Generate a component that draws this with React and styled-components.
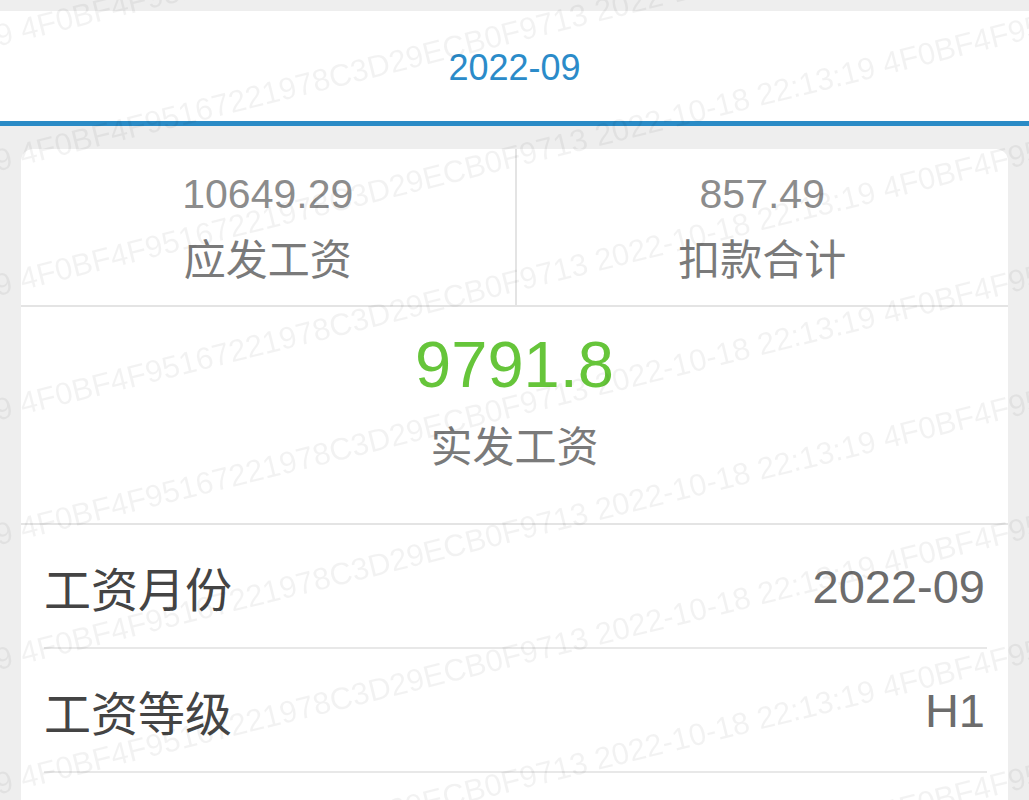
import React from 'react';
import styled, { createGlobalStyle } from 'styled-components';

const GlobalStyle = createGlobalStyle`
	html, body {
		margin: 0;
		padding: 0;
		background: #eeeeee;
	}
	body {
		font-family: "Liberation Sans", "Noto Sans CJK SC", sans-serif;
	}
`;

const WM_TEXT = '4F0BF4F95167221978C3D29ECB0F9713 2022-10-18 22:13:19 ';
const WM_ANGLE = 14;
const WM_LINE = 121;
const WM_PERIOD = 889;

const Page = styled.div`
	padding-top: 11px;
	min-height: 789px;
`;

const Header = styled.div`
	height: 115px;
	box-sizing: border-box;
	padding-top: 3px;
	background: #ffffff;
	border-bottom: 5px solid #2a8bc6;
	display: flex;
	align-items: center;
	justify-content: center;
	font-size: 36px;
	color: #2b8bc9;
`;

const Card = styled.div`
	margin: 23px 21px 0;
	padding-bottom: 60px;
	background: #ffffff;
	border-radius: 12px 12px 0 0;
	overflow: hidden;
`;

const Totals = styled.div`
	display: grid;
	grid-template-columns: 1fr 1fr;
	border-bottom: 2px solid #e4e4e4;
`;

const TotalCell = styled.div`
	display: flex;
	flex-direction: column;
	align-items: center;
	padding: 20px 0 19px;
	gap: 17px;
	& + & {
		border-left: 2px solid #e4e4e4;
	}
`;

const Amount = styled.div`
	font-size: ${p => (p.$big ? 65 : 41)}px;
	line-height: ${p => (p.$big ? 76 : 50)}px;
	color: ${p => (p.$big ? '#66c53a' : '#8c8c8c')};
`;

const Caption = styled.div`
	font-size: 42px;
	line-height: 50px;
	color: #7a7a7a;
`;

const NetPay = styled.div`
	display: flex;
	flex-direction: column;
	align-items: center;
	gap: 20px;
	padding: 20px 0 50px;
	border-bottom: 2px solid #e4e4e4;
`;

const InfoRow = styled.div`
	display: flex;
	align-items: center;
	justify-content: space-between;
	height: 122px;
	margin: 0 21px 0 23px;
	border-bottom: 2px solid #e8e8e8;
	font-size: 47px;
`;

const InfoLabel = styled.span`
	color: #444444;
`;

const InfoValue = styled.span`
	color: #6c6c6c;
	padding-right: 2px;
`;

const WatermarkLayer = styled.div`
	position: fixed;
	inset: 0;
	overflow: hidden;
	pointer-events: none;
	z-index: 10;
`;

const WatermarkSheet = styled.div`
	position: absolute;
	left: 0;
	top: -27px;
	transform-origin: 0 0;
	transform: rotate(-${WM_ANGLE}deg);
`;

const WatermarkLine = styled.div`
	white-space: pre;
	font-family: "Liberation Sans", sans-serif;
	font-size: 31px;
	line-height: ${WM_LINE}px;
	color: rgba(0, 0, 0, 0.05);
	margin-left: ${p => p.$shift}px;
`;

const Watermark = () => {
	const rad = (WM_ANGLE * Math.PI) / 180;
	const lines = Array.from({ length: 10 }, (_, k) => {
		const v = k * WM_LINE + WM_LINE / 2;
		const start = (20 - v * Math.sin(rad)) / Math.cos(rad);
		return Math.round(start - WM_PERIOD);
	});
	return (
		<WatermarkLayer>
			<WatermarkSheet>
				{lines.map((shift, i) => (
					<WatermarkLine key={i} $shift={shift}>
						{WM_TEXT.repeat(4)}
					</WatermarkLine>
				))}
			</WatermarkSheet>
		</WatermarkLayer>
	);
};

const details = [
	{ label: '工资月份', value: '2022-09' },
	{ label: '工资等级', value: 'H1' }
];

const App = () => (
	<Page>
		<GlobalStyle />
		<Header>2022-09</Header>
		<Card>
			<Totals>
				<TotalCell>
					<Amount>10649.29</Amount>
					<Caption>应发工资</Caption>
				</TotalCell>
				<TotalCell>
					<Amount>857.49</Amount>
					<Caption>扣款合计</Caption>
				</TotalCell>
			</Totals>
			<NetPay>
				<Amount $big>9791.8</Amount>
				<Caption>实发工资</Caption>
			</NetPay>
			{details.map(item => (
				<InfoRow key={item.label}>
					<InfoLabel>{item.label}</InfoLabel>
					<InfoValue>{item.value}</InfoValue>
				</InfoRow>
			))}
		</Card>
		<Watermark />
	</Page>
);

export default App;
